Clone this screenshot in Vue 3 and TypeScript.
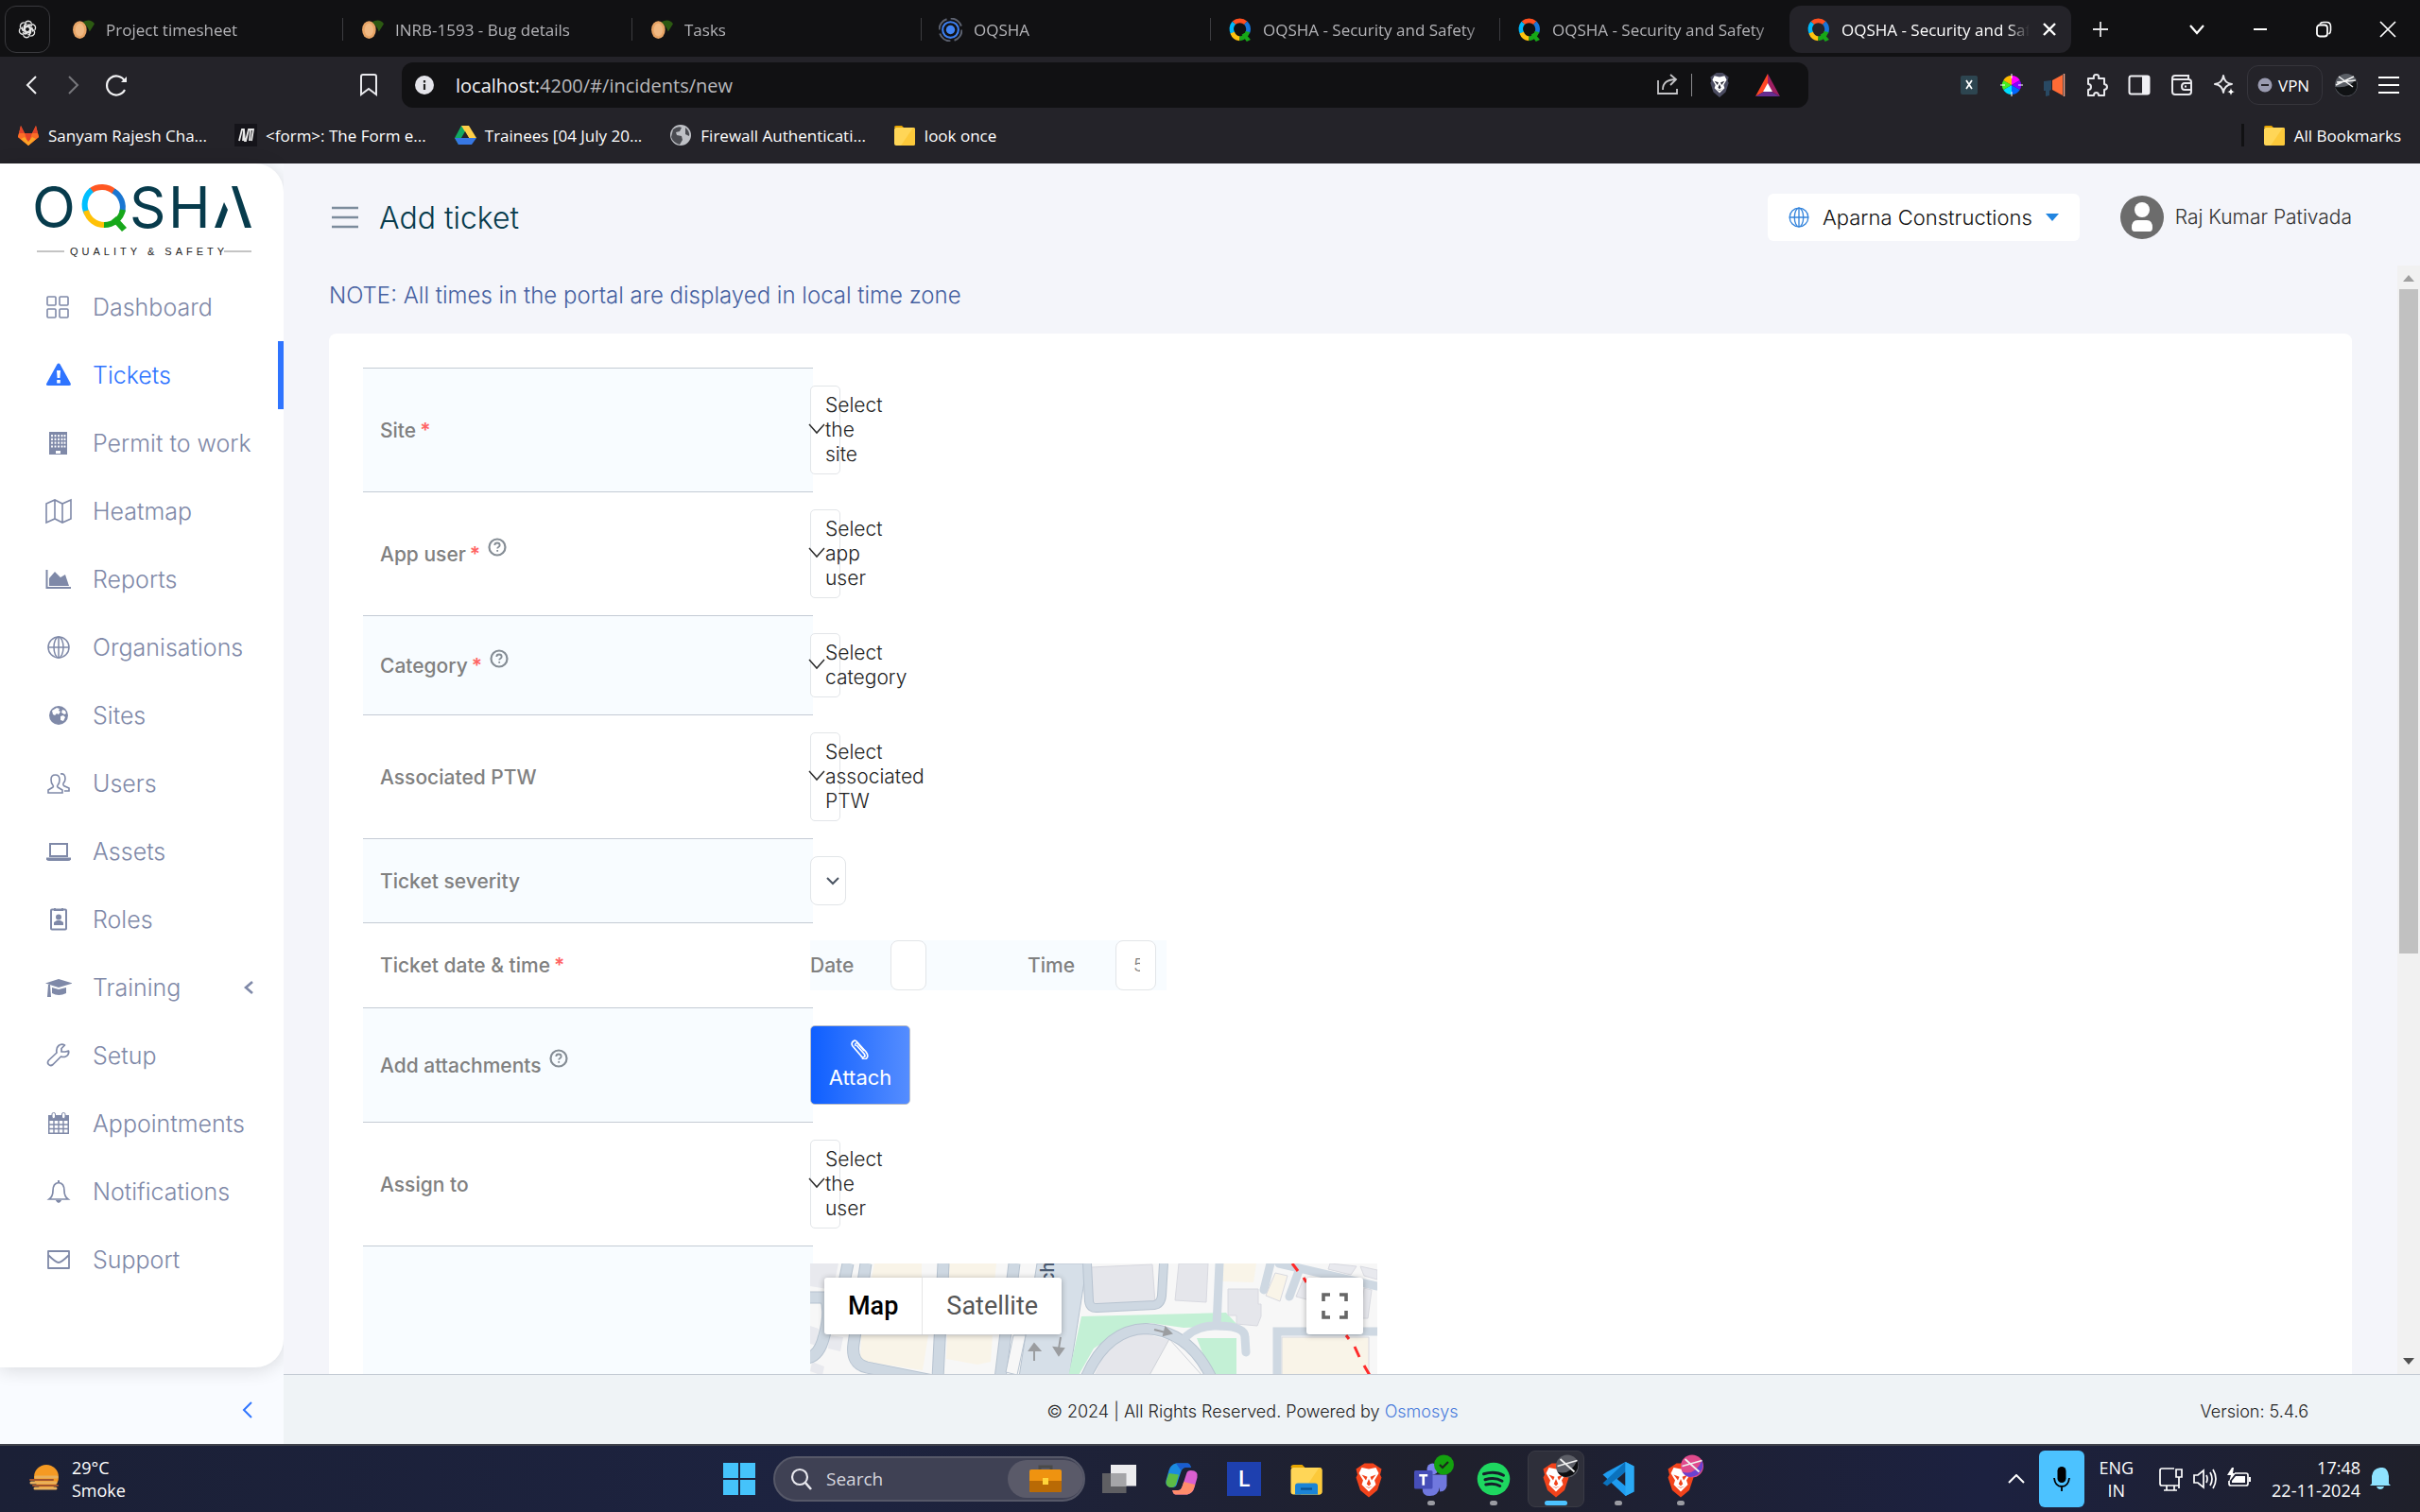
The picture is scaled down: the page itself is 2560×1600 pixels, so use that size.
<script setup lang="ts">
import { ref } from 'vue'

interface Tab { title: string; icon: string; active?: boolean }
interface NavItem { label: string; icon: string; active?: boolean; expandable?: boolean }
interface FormRow { id: string; label: string; required?: boolean; help?: boolean; kind: 'pick' | 'severity' | 'datetime' | 'attach' | 'map'; placeholder?: string }

const leaf = '<ellipse cx="9" cy="12" rx="7" ry="9" fill="#e8a566"/><ellipse cx="9" cy="12" rx="4.500" ry="6.500" fill="#f0b983"/><path d="M12 4Q20 0 24 6L19 14Q17 8 12 4Z" fill="#2c5a12"/>'
const qring = '<g fill="none" stroke-width="4.500"><path d="M6 5A9 9 0 0 1 18 5" stroke="#ff4f1f"/><path d="M5 16A9.500 9.500 0 0 1 6 5" stroke="#00b8fb"/><path d="M12 21A9 9 0 0 1 4.500 15" stroke="#ffc20e"/><path d="M18 5A9.500 9.500 0 0 1 20 15" stroke="#1976d8"/><path d="M20 14A9 9 0 0 1 12 21" stroke="#17a817"/></g><path d="M14 17l3-2 6 7-4 2z" fill="#17a817"/>'
const target = '<g fill="none"><circle cx="12" cy="12" r="11.500" stroke="#5d6270" stroke-width="2" stroke-dasharray="14 4"/><circle cx="12" cy="12" r="8" stroke="#3d7ff0" stroke-width="2"/></g><circle cx="12" cy="12" r="4.500" fill="#4285f4"/>'
const lion = '<path d="M6 3l3-2h6l3 2 3 2-1 4 1 2-3 9-6 5-6-5-3-9 1-2-1-4z" fill="#f2431b"/><path d="M12 5l5-1 2 4-3 5 1 3-5 5-5-5 1-3-3-5 2-4z" fill="#fff"/><path d="M7 9l4 1.500L10 13zM17 9l-4 1.500 1 2.500zM12 12l1.500 3.500L12 17l-1.500-1.500zM9 17l3 1.500L15 17l-3 1z" fill="#f2431b"/>'
const shieldIcon = lion.replace('#f2431b', '#4a4b60').replace('#f2431b', '#2c2c38')
const folder = '<path d="M1 4a2 2 0 0 1 2-2h6l3 3H3z" fill="#e6a400"/><rect x="1" y="4" width="22" height="19" rx="2" fill="#ffd657"/><path d="M21 4a2 2 0 0 1 2 2v15a2 2 0 0 1-2 2H8z" fill="#fcc93a"/>'

const tabs: Tab[] = [
  { title: 'Project timesheet', icon: leaf },
  { title: 'INRB-1593 - Bug details', icon: leaf },
  { title: 'Tasks', icon: leaf },
  { title: 'OQSHA', icon: target },
  { title: 'OQSHA - Security and Safety', icon: qring },
  { title: 'OQSHA - Security and Safety', icon: qring },
  { title: 'OQSHA - Security and Safety', icon: qring, active: true },
]

const bookmarks = [
  { title: 'Sanyam Rajesh Cha...', icon: '<path d="M12 23L1 14 4 2l4 8h8l4-8 3 12z" fill="#fc6d26"/><path d="M12 23L8 10h8z" fill="#e24329"/><path d="M12 23L1 14l1-4h6zM12 23l11-9-1-4h-6z" fill="#fc6d26"/><path d="M12 23L4 16l4-2 4 5 4-5 4 2z" fill="#fca326"/><path d="M4 2l4 8H2zM20 2l-4 8h6z" fill="#e24329"/>' },
  { title: '<form>: The Form e...', icon: '<rect width="24" height="24" fill="#15141a"/><path d="M5 18L8 6h2l1 12h1l3-12h2l-1 12M10 6l-1 12M17 6l3 0-2 12" fill="none" stroke="#e8e8e8" stroke-width="1.800"/>' },
  { title: 'Trainees [04 July 20...', icon: '<path d="M8 2h8l-8 14-3 6-4-7z" fill="#11a861"/><path d="M8 2h8l8 13h-8z" fill="#ffcf48"/><path d="M1 15l4 7h14l5-7z" fill="#3777e3"/><path d="M12 8l4 7H8z" fill="#242329"/>' },
  { title: 'Firewall Authenticati...', icon: '<circle cx="12" cy="12" r="11" fill="#bfc1c6"/><path d="M4 6q5-4 9-2l-2 4-4 1 1 3 5 1 1 4-3 5q-7-2-9-8zM17 4q5 4 4 9l-4-2z" fill="#4a4b51"/>' },
  { title: 'look once', icon: folder },
]

const nav: NavItem[] = [
  { label: 'Dashboard', icon: '<g fill="none" stroke="currentColor" stroke-width="1.600"><rect x="2" y="3" width="9" height="9" rx="1"/><rect x="15" y="3" width="9" height="9" rx="1"/><rect x="2" y="16" width="9" height="9" rx="1"/><rect x="15" y="16" width="9" height="9" rx="1"/></g>' },
  { label: 'Tickets', active: true, icon: '<path d="M14 1.500q1 0 1.600 1l11 20q1 2.500-1.600 2.500H3Q0 25 1.400 22.500l11-20Q13 1.500 14 1.500z" fill="currentColor"/><path d="M12 9h4l-.6 8h-2.800zM12.200 19h3.600v3.400h-3.600z" fill="#fff"/>' },
  { label: 'Permit to work', icon: '<path d="M4 2h19v24H4z" fill="currentColor"/><path d="M7 5v14M10.500 5v14M14 5v14M17.500 5v14M20.500 5v14" stroke="#fff" stroke-width="1.800" stroke-dasharray="2.200 1.600"/><path d="M11 22h5v3h-5z" fill="#fff"/>' },
  { label: 'Heatmap', icon: '<path d="M1 6l9-4 8 4 9-4v20l-9 4-8-4-9 4zM10 2v20M18 6v20" fill="none" stroke="currentColor" stroke-width="1.600"/>' },
  { label: 'Reports', icon: '<path d="M1.500 4v19H27" fill="none" stroke="currentColor" stroke-width="2"/><path d="M4 21v-8l6-7 6 6 5-3 4 12z" fill="currentColor"/>' },
  { label: 'Organisations', icon: '<g fill="none" stroke="currentColor" stroke-width="1.500"><circle cx="14" cy="14" r="11"/><ellipse cx="14" cy="14" rx="5" ry="11"/><path d="M3 14h22M14 3v22"/></g>' },
  { label: 'Sites', icon: '<circle cx="14" cy="14" r="10" fill="currentColor"/><path d="M7 9l5-3 3 1-1 2 2 1-2 3-2-1-2 2-2-1zM16 15l3-1 2 2-2 4-3-1zM18 8l3 1 1 3-2 1-3-2z" fill="#fff"/>' },
  { label: 'Users', icon: '<g fill="none" stroke="currentColor" stroke-width="1.600"><path d="M3 24v-3l5-3q1-1 0-2-2-2-2-6 0-5 4.500-5T15 10q0 4-2 6-1 1 0 2l5 3v3zM16 4q5-1 5 5 0 3-2 5-.500 1.500.500 2.500L25 19v3h-5"/></g>' },
  { label: 'Assets', icon: '<path d="M5 6h18v13H5z" fill="none" stroke="currentColor" stroke-width="2"/><path d="M1 20.500h26v2q-1 1.500-3 1.500H4q-2 0-3-1.500z" fill="currentColor"/>' },
  { label: 'Roles', icon: '<rect x="6" y="3.500" width="16" height="21" rx="1" fill="none" stroke="currentColor" stroke-width="2"/><path d="M9 2h2v2h6V2h2v3H9z" fill="currentColor"/><circle cx="14" cy="11.500" r="3" fill="currentColor"/><path d="M9 20v-3l3-2h4l3 2v3z" fill="currentColor"/>' },
  { label: 'Training', icon: '<path d="M0 9.500L14 5l15 4.500L14 14z" fill="currentColor"/><path d="M7 14l7 2 8-2v6q-8 4-15 0zM3 11h2l1 13H2z" fill="currentColor"/>' },
  { label: 'Setup', icon: '<path d="M24.500 9q1 4-3 6-2.500 1-5 0L8 23.500q-2.500 2-4.500 0t0-4.500L12 11q-1-5 2-7.500T20.500 3L17 6.500V10h4z" fill="none" stroke="currentColor" stroke-width="1.700" stroke-linejoin="round"/>' },
  { label: 'Appointments', icon: '<path d="M3 5h22v20H3z" fill="currentColor"/><path d="M4.500 11h19v12.500h-19z" fill="#fff"/><path d="M9 11v13M14 11v13M19 11v13M4 15h20M4 19.500h20" stroke="currentColor" stroke-width="1.400"/><rect x="7" y="2.500" width="3.500" height="6" rx="1.500" fill="#fff" stroke="currentColor"/><rect x="17.500" y="2.500" width="3.500" height="6" rx="1.500" fill="#fff" stroke="currentColor"/>' },
  { label: 'Notifications', icon: '<path d="M4 22q4-3 4-9 0-8 6-8.500 6 .500 6 8.500 0 6 4 9z" fill="none" stroke="currentColor" stroke-width="1.700"/><path d="M13 2h2v3h-2zM11 23h6q-1 3-3 3t-3-3z" fill="currentColor"/>' },
  { label: 'Support', icon: '<path d="M3 5h22v18H3zM3 9q8 8 11 8t11-8" fill="none" stroke="currentColor" stroke-width="1.800" stroke-linejoin="round"/>' },
].map((n) => ({ expandable: n.label === 'Training', ...n }))

const rows: FormRow[] = [
  { id: 'site', label: 'Site', required: true, kind: 'pick', placeholder: 'Select the site' },
  { id: 'app-user', label: 'App user', required: true, help: true, kind: 'pick', placeholder: 'Select app user' },
  { id: 'category', label: 'Category', required: true, help: true, kind: 'pick', placeholder: 'Select category' },
  { id: 'ptw', label: 'Associated PTW', kind: 'pick', placeholder: 'Select associated PTW' },
  { id: 'severity', label: 'Ticket severity', kind: 'severity' },
  { id: 'date', label: 'Ticket date & time', required: true, kind: 'datetime' },
  { id: 'attach', label: 'Add attachments', help: true, kind: 'attach' },
  { id: 'assignee', label: 'Assign to', kind: 'pick', placeholder: 'Select the user' },
  { id: 'map', label: '', kind: 'map' },
]

const extensions = [
  { name: 'Translate', icon: '<rect x="3" y="2" width="18" height="20" rx="2" fill="#2d4550"/><path d="M9 7l6 9M15 7l-6 9" stroke="#fff" stroke-width="1.700"/>' },
  { name: 'Colour picker', icon: '<path d="M12 12V2a10 10 0 0 1 8.700 5z" fill="#f0f"/><path d="M12 12l8.700-5a10 10 0 0 1 0 10z" fill="#80f"/><path d="M12 12l8.700 5A10 10 0 0 1 12 22z" fill="#06f"/><path d="M12 12v10a10 10 0 0 1-8.700-5z" fill="#0df"/><path d="M12 12l-8.700 5a10 10 0 0 1 0-10z" fill="#4e2"/><path d="M12 12L3.300 7A10 10 0 0 1 12 2z" fill="#fb0"/><path d="M12 0v5M12 19v5M0 12h5M19 12h5" stroke="#fff"/>' },
  { name: 'Announcements', icon: '<path d="M10 7l11-6v22l-11-6z" fill="#ff6b35"/><path d="M1 8l8-1v10l-2 1v5l-4 1v-6H1z" fill="#294963"/><path d="M22.500 0v24" stroke="#f6a58a" stroke-width="1.500"/>' },
  { name: 'Extensions', icon: '<path d="M3 5h6q-1-4 2.500-4T14 5h6v6q3 .500 3 3t-3 3v6h-6q0-3-2.500-3T9 23H3v-6q3 0 3-3t-3-3z" fill="none" stroke="#e8e8ec" stroke-width="2" stroke-linejoin="round"/>' },
  { name: 'Side panel', icon: '<rect x="1.500" y="2.500" width="21" height="19" rx="2" fill="none" stroke="#f0f0f4" stroke-width="2"/><path d="M15 3h7v18h-7z" fill="#f0f0f4"/>' },
  { name: 'Wallet', icon: '<path d="M2 5q0-3 3-3h14v4H4q-2 0-2-1v14q0 3 3 3h14q3 0 3-3V9q0-3-3-3M22 10h-7q-3 0-3 3.500t3 3.500h7zM15 13.500h2" fill="none" stroke="#e8e8ec" stroke-width="2"/>' },
  { name: 'Assistant', icon: '<path d="M11 2q1 8 9 9-8 1-9 9-1-8-9-9 8-1 9-9z" fill="none" stroke="#e8e8ec" stroke-width="2" stroke-linejoin="round"/><path d="M19 15q.500 4 4 4-3.500.500-4 4-.500-3.500-4-4 3.500 0 4-4z" fill="#fff"/>' },
]

const ball = (a: string, b: string) => `<g transform="translate(12 -5)"><circle cx="8" cy="8" r="8" fill="${a}"/><path d="M1 12Q10 15 15 4q2 6-3 10-7 4-11-2z" fill="${b}"/><path d="M1 8l14-4M3 3l10 9" stroke="#eee" stroke-width="1.200"/></g>`

const apps = [
  { name: 'Task view', dot: '', icon: '<rect x="0" y="8" width="17" height="14" fill="#5f5f63"/><rect x="6" y="2" width="18" height="15" fill="#ececee"/><path d="M6 8h11v9H6z" fill="#a5a5a8"/>' },
  { name: 'Copilot', dot: '', icon: '<path d="M1 13l2-7q1-4 5-5h8q2 0 2.500 3h-4q-2 0-3 3L8.500 16q-.500 2-3 2Q0 18 1 13z" fill="#1b8be0"/><path d="M1 14l2-6 7 1-2 7q-1 2-3 2-4 0-4-4z" fill="#5dbb46"/><path d="M8 1h8q2 0 2.500 3h-4q-2 0-3 2z" fill="#1a5ccf"/><path d="M23 11l-2 7q-1 4-5 5H8q-2 0-2.500-3h4q2 0 3-3l3-9q.500-2 3-2 5.500 0 4.500 5z" fill="#d95fd0"/><path d="M5.500 20h4q2 0 3-3l1-3 8 2-1 3q-1 3-4.500 4H8q-2 0-2.500-3z" fill="#ff8c6b"/>' },
  { name: 'L', dot: '', icon: 'letter' },
  { name: 'File Explorer', dot: '', icon: folder + '<path d="M4 23v-6q0-2 2-2h12q2 0 2 2v6z" fill="#1b84d6"/><path d="M8 19h8" stroke="#0b5394" stroke-width="1.500"/>' },
  { name: 'Brave', dot: '', icon: lion },
  { name: 'Teams', dot: 'dot', icon: '<circle cx="13" cy="5" r="4" fill="#7b83eb"/><path d="M6 9h12v9q-1 6-7 6t-5-6zM18 9h5v8q-1 4-5 4z" fill="#7078de"/><rect x="0" y="6" width="13" height="13" rx="1" fill="#464eb8"/><path d="M3.500 9.500h6M6.500 9.500v7" stroke="#fff" stroke-width="1.800"/><circle cx="21" cy="2" r="7" fill="#13a10e"/><path d="M18 2l2 2 4-4" fill="none" stroke="#1b2a1b" stroke-width="1.500"/>' },
  { name: 'Spotify', dot: 'dot', icon: '<circle cx="12" cy="12" r="11.500" fill="#1ed760"/><path d="M5 8.500q8-2.500 14 1M6 12.500q7-2 12 1M6.500 16q6-1.500 10 1" fill="none" stroke="#15202b" stroke-width="2" stroke-linecap="round"/>' },
  { name: 'Brave, dark profile', dot: 'bar', icon: lion + ball('#5c5e66', '#0c0d10') },
  { name: 'Visual Studio Code', dot: 'dot', icon: '<path d="M17 0l6 3v18l-6 3L1 9l3-2z" fill="#1f9cf0"/><path d="M17 0L1 15l3 2L17 7z" fill="#0b72bd"/><path d="M17 7v10l-6-5z" fill="#1d2233"/><path d="M17 0l6 3v18l-6 3z" fill="#2aaaf5"/>' },
  { name: 'Brave, purple profile', dot: 'dot', icon: lion + ball('#e04a8c', '#6a43d0') },
]

const date = ref('')
const time = ref('5')
</script>

<template>
  <div class="screen">
    <header class="browser">
      <div class="tabstrip">
        <button class="pinned" aria-label="Pinned tab">
          <svg width="20" height="20" viewBox="0 0 24 24"><g fill="none" stroke="#e6e6e6" stroke-width="1.600"><path v-for="a in [0, 60, 120, 180, 240, 300]" :key="a" :transform="`rotate(${a} 12 12)`" d="M9 14V6q0-4 4-4.500 3 0 4.500 3M9 9l5-3 4 2"/></g></svg>
        </button>
        <div v-for="(t, i) in tabs" :key="i" class="tab" :class="{ active: t.active }">
          <svg class="fav" viewBox="0 0 24 24" v-html="t.icon"></svg>
          <span class="tab-title">{{ t.title }}</span>
          <button v-if="t.active" class="bare" aria-label="Close tab"><svg width="14" height="14" viewBox="0 0 14 14"><path d="M1 1l12 12M13 1L1 13" stroke="#fff" stroke-width="2.400"/></svg></button>
        </div>
        <button class="bare plus" aria-label="New tab"><svg width="18" height="18" viewBox="0 0 18 18"><path d="M9 1v16M1 9h16" stroke="#e4e4e6" stroke-width="1.800"/></svg></button>
        <div class="window-buttons">
          <button class="bare" aria-label="Search tabs"><svg width="18" height="18" viewBox="0 0 18 18"><path d="M2 5l7 8 7-8" fill="none" stroke="#fff" stroke-width="2.200"/></svg></button>
          <button class="bare" aria-label="Minimise"><svg width="16" height="18" viewBox="0 0 16 18"><path d="M1 9h14" stroke="#fff" stroke-width="2"/></svg></button>
          <button class="bare" aria-label="Restore"><svg width="18" height="18" viewBox="0 0 18 18"><path d="M5 3.500q1-2 4-2h3q4.500 0 4.500 4.500v4q0 3-2 4" fill="none" stroke="#fff" stroke-width="1.600"/><rect x="2" y="4.500" width="11" height="12" rx="3" fill="none" stroke="#fff" stroke-width="1.800"/></svg></button>
          <button class="bare" aria-label="Close"><svg width="18" height="18" viewBox="0 0 18 18"><path d="M1 1l16 16M17 1L1 17" stroke="#fff" stroke-width="1.700"/></svg></button>
        </div>
      </div>
      <div class="toolbar">
        <div class="history">
          <button class="bare" aria-label="Back"><svg width="24" height="24" viewBox="0 0 24 24"><path d="M17 3l-9 9 9 9" fill="none" stroke="#f2f2f4" stroke-width="2"/></svg></button>
          <button class="bare" aria-label="Forward"><svg width="24" height="24" viewBox="0 0 24 24"><path d="M7 3l9 9-9 9" fill="none" stroke="#77777c" stroke-width="2"/></svg></button>
          <button class="bare" aria-label="Reload"><svg width="24" height="24" viewBox="0 0 24 24"><path d="M21 8a10 10 0 1 0 0 9" fill="none" stroke="#f2f2f4" stroke-width="2.200"/><path d="M17 9h6V3z" fill="#f2f2f4"/></svg></button>
        </div>
        <button class="bare mark" aria-label="Bookmark"><svg width="24" height="24" viewBox="0 0 24 24"><path d="M4 3q0-2 2-2h12q2 0 2 2v19l-8-6-8 6z" fill="none" stroke="#e8e8ec" stroke-width="2"/></svg></button>
        <div class="address">
          <svg width="20" height="20" viewBox="0 0 20 20"><circle cx="10" cy="10" r="10" fill="#e4e4ea"/><path d="M10 9v6M10 5v2.400" stroke="#222" stroke-width="2.200"/></svg>
          <span class="url"><span>localhost:</span>4200/#/incidents/new</span>
          <button class="bare" aria-label="Share"><svg width="24" height="24" viewBox="0 0 24 24"><path d="M2 7v14h20v-5M7 17q0-11 14-11M15 1l6 5-6 6" fill="none" stroke="#c5c5c8" stroke-width="1.800"/></svg></button>
          <i class="rule"></i>
          <button class="bare" aria-label="Shields"><svg width="26" height="28" viewBox="0 0 24 26" v-html="shieldIcon"></svg></button>
          <button class="bare" aria-label="Rewards"><svg width="26" height="24" viewBox="0 0 26 24"><path d="M13 0L0 24l9-5 4-8z" fill="#ff4724"/><path d="M13 0l13 24-9-5-4-8z" fill="#9e1f63"/><path d="M0 24h26l-9-5H9z" fill="#662d91"/><path d="M13 10l5 9H8z" fill="#fff"/></svg></button>
        </div>
        <div class="ext">
          <button v-for="e in extensions" :key="e.name" class="bare" :aria-label="e.name"><svg width="24" height="24" viewBox="0 0 24 24" v-html="e.icon"></svg></button>
        </div>
        <button class="vpn"><svg width="16" height="16" viewBox="0 0 16 16"><circle cx="8" cy="8" r="7.500" fill="#9a9bb0"/><path d="M4 8h8" stroke="#242329" stroke-width="2"/></svg>VPN</button>
        <button class="bare" aria-label="Profile"><svg width="24" height="24" viewBox="0 0 24 24"><circle cx="12" cy="12" r="12" fill="#5b5f66"/><path d="M0 14Q15 16 22 6q4 10-4 16-12 5-18-8z" fill="#101214"/><path d="M2 9l20-2M4 3l15 11M1 12L20 3" stroke="#f4f4f4" stroke-width="1.500"/></svg></button>
        <button class="bare menu" aria-label="Menu"><svg width="24" height="20" viewBox="0 0 24 20"><path d="M1 2h22M1 10h22M1 18h22" stroke="#fff" stroke-width="2"/></svg></button>
      </div>
      <nav class="bookmarks">
        <a v-for="b in bookmarks" :key="b.title" href="#"><svg width="24" height="24" viewBox="0 0 24 24" v-html="b.icon"></svg>{{ b.title }}</a>
        <i class="dark-rule"></i>
        <a href="#"><svg width="24" height="24" viewBox="0 0 24 24" v-html="folder"></svg>All Bookmarks</a>
      </nav>
    </header>

    <div class="app">
      <aside>
        <div class="side-card">
          <svg class="logo" width="240" height="84" viewBox="0 0 240 84">
            <g font-family="Inter, sans-serif" font-size="60" font-weight="400" fill="#073b4c">
              <text x="6" y="49">O</text><text x="109" y="49">S</text><text x="150" y="49">H</text>
            </g>
            <g fill="none" stroke-width="6">
              <path d="M68 10A20 20 0 0 1 93 11" stroke="#ff5722"/>
              <path d="M64 34A20 20 0 0 1 69 9" stroke="#00bfff"/>
              <path d="M83 46A20 20 0 0 1 63 31" stroke="#ffc107"/>
              <path d="M92 10A20 20 0 0 1 101 33" stroke="#1976d2"/>
              <path d="M102 30A20 20 0 0 1 82 46" stroke="#17a81a"/>
            </g>
            <path d="M90 41l5-4 11 12-5 4z" fill="#17a81a"/>
            <path d="M217 5h6l15 44h-7zM209 22l4 8-7 19h-7z" fill="#073b4c"/>
            <path d="M11 74h29M209 74h29" stroke="#8a8a8a"/>
            <text x="46" y="78" font-family="Liberation Sans, Arial, sans-serif" font-size="11" letter-spacing="4" fill="#222">QUALITY &amp; SAFETY</text>
          </svg>
          <nav class="nav">
            <a v-for="n in nav" :key="n.label" href="#" :class="{ active: n.active }">
              <svg width="28" height="28" viewBox="0 0 28 28" v-html="n.icon"></svg>
              <span>{{ n.label }}</span>
              <svg v-if="n.expandable" class="more" width="12" height="14" viewBox="0 0 12 14"><path d="M10 1L3 7l7 6" fill="none" stroke="#7f89a8" stroke-width="2.600"/></svg>
            </a>
          </nav>
        </div>
        <button class="bare collapse" aria-label="Collapse sidebar"><svg width="12" height="18" viewBox="0 0 12 18"><path d="M10 1L2 9l8 8" fill="none" stroke="#2f74ff" stroke-width="2"/></svg></button>
      </aside>

      <main>
        <div class="topbar">
          <button class="bare" aria-label="Toggle menu"><svg width="28" height="24" viewBox="0 0 28 24"><path d="M0 2h28M0 12h28M0 22h28" stroke="#7c8c9c" stroke-width="2.400"/></svg></button>
          <h1>Add ticket</h1>
          <button class="org">
            <svg width="22" height="22" viewBox="0 0 28 28"><g fill="none" stroke="#3484dc" stroke-width="1.700"><circle cx="14" cy="14" r="12.500"/><ellipse cx="14" cy="14" rx="6" ry="12.500"/><path d="M1 14h26M14 1v26"/></g></svg>
            <span>Aparna Constructions</span>
            <svg width="14" height="8" viewBox="0 0 14 8"><path d="M0 0h14L7 8z" fill="#2185e0"/></svg>
          </button>
          <svg class="avatar" width="46" height="46" viewBox="0 0 46 46"><circle cx="23" cy="23" r="23" fill="#6c6c6c"/><circle cx="23" cy="15" r="8" fill="#fff"/><path d="M12 34q0-8 6-8h10q6 0 6 8 0 4-3 4H15q-3 0-3-4z" fill="#fff"/></svg>
          <span class="user">Raj Kumar Pativada</span>
        </div>

        <div class="body">
          <div class="scroller">
            <p class="note">NOTE: All times in the portal are displayed in local time zone</p>
            <form class="card" @submit.prevent>
              <div v-for="r in rows" :key="r.id" class="row">
                <div class="cell">
                  <label :for="r.id">{{ r.label }}<b v-if="r.required">*</b></label>
                  <svg v-if="r.help" class="help" width="20" height="20" viewBox="0 0 20 20"><circle cx="10" cy="10" r="8.500" fill="none" stroke="#858d95" stroke-width="2.200"/><path d="M7.300 8q0-2.500 2.700-2.500T12.700 8q0 1-1.500 2-1 .600-1 1.500M10.200 13v1.800" fill="none" stroke="#858d95" stroke-width="1.800"/></svg>
                </div>
                <div class="control">
                  <div v-if="r.kind === 'pick'" class="pick">
                    <select :id="r.id"><option value=""></option></select>
                    <span>{{ r.placeholder }}</span>
                    <svg width="18" height="12" viewBox="0 0 18 12"><path d="M1 1l8 9 8-9" fill="none" stroke="#2d2d2d" stroke-width="1.500"/></svg>
                  </div>
                  <div v-else-if="r.kind === 'severity'" class="severity">
                    <select :id="r.id"><option value=""></option></select>
                    <svg width="14" height="10" viewBox="0 0 14 10"><path d="M1 1l6 6 6-6" fill="none" stroke="#4b5563" stroke-width="2"/></svg>
                  </div>
                  <div v-else-if="r.kind === 'datetime'" class="datetime">
                    <label for="date">Date</label><input id="date" v-model="date" class="d" type="text" />
                    <label for="time">Time</label><input id="time" v-model="time" class="t" type="text" />
                  </div>
                  <button v-else-if="r.kind === 'attach'" :id="r.id" class="attach">
                    <svg width="22" height="22" viewBox="0 0 22 22"><path d="M7 7l8 9q2 2.500 0 3.500t-3-1L3 8Q1 5 3.500 3T8 4l9 10q3 4 1 6.500t-5 .500" fill="none" stroke="#fff" stroke-width="1.700"/><path d="M6 8q-1-2 .500-3T9 6l6 7" fill="none" stroke="#fff" stroke-width="1.500"/></svg>
                    Attach
                  </button>
                  <div v-else class="map">
                    <svg width="600" height="120" viewBox="0 0 600 120">
                      <rect width="600" height="120" fill="#f7f7f7"/>
                      <path d="M0 0h30l-6 28-24-4zM0 66l9 3-2 18-7-2zM20 76l15 2-3 15-13-3zM2 104l13 5-2 10-13-5z" fill="#e8e9ee"/>
                      <path d="M68 0h50v30H62zM54 76h71l-6 37-66-10zM145 0h52l-3 30h-50zM145 76h48l-2 28-14 3-33-6z" fill="#f9f4e8"/>
                      <g fill="none" stroke="#b7c3d0" stroke-width="13"><path d="M40 0l-6 30M0 36h16q6 14-1 40-5 22-18 24M59 0L46 85q-3 21 14 25l90 18M141 0l-6 122M216 0l-15 122"/></g>
                      <g fill="none" stroke="#ced8e2" stroke-width="11"><path d="M40 0l-6 30M0 36h16q6 14-1 40-5 22-18 24M59 0L46 85q-3 21 14 25l90 18M141 0l-6 122M216 0l-15 122"/></g>
                      <path d="M240 0h53l-19 120h-53z" fill="#d6dfe8" stroke="#b7c3d0"/>
                      <path d="M215 76h13l-9 42-12-3z" fill="#f7f7f7" stroke="#b7c3d0"/>
                      <path d="M287 56l153-4 13 14-58 2-35-5-30 7-30 20-17 30h-10zM409 79h42v41h-26z" fill="#c3f0d5"/>
                      <path d="M297 4l65-3 3 41-67 3zM390 0h31l-2 41-33-2zM442 27h32v16h3v13l-4 10-22-2v-9h-9z" fill="#e5e6eb" stroke="#d8d9e0"/>
                      <path d="M293 0l2 40q1 8 9 7l60-3q7-1 8-10l2-34" fill="none" stroke="#b7c3d0" stroke-width="10"/>
                      <path d="M293 0l2 40q1 8 9 7l60-3q7-1 8-10l2-34" fill="none" stroke="#ced8e2" stroke-width="8"/>
                      <path d="M436 0h36l-3 20-33-1z" fill="#f9f4e8"/>
                      <path d="M300 120q15-42 50-47l30 8-22 39z" fill="#e5e6eb"/>
                      <path d="M380 80l36 40h-58z" fill="#f7f7f7" stroke="#cfd2d8"/>
                      <g fill="none" stroke="#b7c3d0" stroke-width="12"><path d="M291 122q22-52 64-53 46 2 70 53"/></g>
                      <g fill="none" stroke="#ced8e2" stroke-width="10"><path d="M291 122q22-52 64-53 46 2 70 53"/></g>
                      <path d="M398 77q14-12 32-11l3-66M430 66q30 0 30 12l1 16M487 0l-7 28M518 5l-11 30M496 0l104 24M494 120V72h106" fill="none" stroke="#ced8e2" stroke-width="9" stroke-linecap="round"/>
                      <path d="M492 10l13 3-8 27-15-6zM499 78h92v42h-92z" fill="#f9f4e8" stroke="#d8d9e0"/>
                      <path d="M550 0l28 3-6 9-24-6zM582 3l18 4v10l-14-4zM522 16l10 2v22l-18-5zM586 26l8 2-4 30h-8z" fill="#e8e9ee" stroke="#d8d9e0"/>
                      <path d="M510 0l6 8M522 15l3 5M567 76l3 4M576 88l5 11M586 108l7 12" stroke="#ff2b2b" stroke-width="3"/>
                      <path d="M237 103V88m-5 4l5-7 6 7zM265 78l-2 12m-5-1l5 8 5-7zM364 70l12 3m0-5l6 6-8 2z" fill="#9b9da0" stroke="#9b9da0" stroke-width="2"/>
                      <text transform="translate(258 20) rotate(-90)" font-family="Roboto, sans-serif" font-size="20" font-weight="500" fill="#4a5a70">ch</text>
                    </svg>
                    <div class="map-type"><button>Map</button><button>Satellite</button></div>
                    <button class="full" aria-label="Full screen"><svg width="28" height="28" viewBox="0 0 28 28"><path d="M2 9V2h7M19 2h7v7M26 19v7h-7M9 26H2v-7" fill="none" stroke="#666" stroke-width="3.600"/></svg></button>
                  </div>
                </div>
              </div>
            </form>
          </div>
          <div class="scrollbar">
            <svg width="12" height="7" viewBox="0 0 12 7"><path d="M0 7h12L6 0z" fill="#a0a0a0"/></svg>
            <i></i>
            <svg width="12" height="7" viewBox="0 0 12 7"><path d="M0 0h12L6 7z" fill="#505050"/></svg>
          </div>
        </div>
        <footer>
          <span class="copy">© 2024 | All Rights Reserved. Powered by <a href="#">Osmosys</a></span>
          <span class="version">Version: 5.4.6</span>
        </footer>
      </main>
    </div>

    <div class="taskbar">
      <button class="weather">
        <svg width="36" height="32" viewBox="0 0 36 32"><circle cx="20" cy="14" r="13" fill="#f59a23"/><path d="M9 14h22M4 20h26M8 26h22" stroke="#e8b05c" stroke-width="3" stroke-linecap="round"/><path d="M3 17h24M6 23h26" stroke="#a0522d" stroke-width="2" stroke-linecap="round"/></svg>
        <span>29°C<br />Smoke</span>
      </button>
      <div class="dock">
        <button class="slot" aria-label="Start"><svg width="36" height="36" viewBox="0 0 36 36"><path d="M1 1h16v16H1zM19 1h16v16H19zM1 19h16v16H1zM19 19h16v16H19z" fill="#45c3fb"/></svg></button>
        <label class="search">
          <svg width="24" height="24" viewBox="0 0 24 24"><circle cx="10" cy="10" r="8" fill="none" stroke="#e8e8ee" stroke-width="2.200"/><path d="M16 16l6 7" stroke="#e8e8ee" stroke-width="2.600"/></svg>
          <input type="text" placeholder="Search" aria-label="Search" />
          <span class="chip"><svg width="36" height="30" viewBox="0 0 36 30"><path d="M12 6V2h12v4" fill="none" stroke="#4a4a4a" stroke-width="3"/><rect x="1" y="5" width="34" height="24" rx="2" fill="#ef9310"/><path d="M1 17h34v10q0 2-2 2H3q-2 0-2-2z" fill="#b96a05"/><path d="M15 14h6v7h-6z" fill="#ffd43a"/></svg></span>
        </label>
        <button v-for="a in apps" :key="a.name" class="slot" :class="{ current: a.dot === 'bar' }" :aria-label="a.name">
          <span v-if="a.icon === 'letter'" class="letter">L</span>
          <svg v-else width="36" height="36" viewBox="0 0 24 24" overflow="visible" v-html="a.icon"></svg>
          <i v-if="a.dot" :class="a.dot"></i>
        </button>
      </div>
      <div class="tray">
        <button class="bare" aria-label="Hidden icons"><svg width="18" height="10" viewBox="0 0 18 10"><path d="M1 9l8-8 8 8" fill="none" stroke="#fff" stroke-width="2"/></svg></button>
        <button class="mic" aria-label="Microphone"><svg width="18" height="26" viewBox="0 0 18 26"><rect x="4.500" y="0" width="9" height="17" rx="4.500" fill="#000"/><path d="M1 12q1 9 8 9t8-9M9 21v5" fill="none" stroke="#000" stroke-width="1.800"/></svg></button>
        <span class="lang">ENG<br />IN</span>
        <svg width="26" height="26" viewBox="0 0 26 26"><path d="M17 2H4Q2 2 2 4v14q0 2 2 2h18v-8M6 25h14M9 20v5M17 20v5M19 3h6v8h-6zM22 11v12" fill="none" stroke="#fff" stroke-width="1.700"/></svg>
        <svg width="26" height="26" viewBox="0 0 26 26"><path d="M2 9h4l6-5v18l-6-5H2zM15 9q2 4 0 8M19 6q4 7 0 14M22 3q6 10 0 20" fill="none" stroke="#fff" stroke-width="1.700"/></svg>
        <svg width="26" height="26" viewBox="0 0 26 26"><path d="M9 7h12q2 0 2 2v9q0 2-2 2H5q-2 0-2-2v-3" fill="none" stroke="#fff" stroke-width="1.700"/><path d="M10 10h10v7H6v-2zM24 11h2v5h-2zM6 1L1 9h4l-2 7 7-9H7l1-6z" fill="#fff"/></svg>
        <span class="clock">17:48<br />22-11-2024</span>
        <svg width="22" height="24" viewBox="0 0 22 24"><path d="M2 17V9q1-8 9-9t9 9v8l2 2H0zM7 20h8q-1 3-4 3t-4-3z" fill="#8fe3ff"/></svg>
      </div>
    </div>
  </div>
</template>

<style>
body { background: #f4f5fa; }
</style>

<style scoped>
* { box-sizing: border-box; }
.screen { display: flex; flex-direction: column; height: 100vh; overflow: hidden; font-family: "Open Sans", "Noto Sans", sans-serif; }
button, input, select { font: inherit; color: inherit; }
svg { flex: none; display: block; }
.bare { background: none; border: 0; padding: 0; display: flex; align-items: center; justify-content: center; }

.browser { background: #242329; color: #fff; height: 173px; flex: none; }
.tabstrip { background: #111113; height: 60px; display: flex; align-items: center; padding: 2px 0 0 5px; font-size: 17px; color: #b4b4b8; }
.pinned { width: 48px; height: 50px; margin-right: 4px; border: 1px solid #3a3a3e; border-radius: 12px; background: #111113; padding: 0; display: flex; align-items: center; justify-content: center; }
.tab { flex: 0 1 306px; display: flex; align-items: center; height: 24px; padding: 0 8px 0 18px; border-right: 1px solid #3c3c40; min-width: 0; }
.tab:nth-child(7), .tab.active { border-right: 0; }
.fav { width: 25px; height: 25px; margin-right: 12px; }
.tab-title { flex: 1; overflow: hidden; white-space: nowrap; mask-image: linear-gradient(90deg, #000 88%, transparent); }
.tab.active { flex-basis: 298px; height: 50px; background: #242329; border-radius: 12px; color: #fff; padding-right: 16px; }
.tab.active .bare { margin-left: 14px; }
.plus { margin-left: 22px; }
.window-buttons { margin-left: auto; display: flex; gap: 50px; padding-right: 25px; }

.toolbar { height: 60px; display: flex; align-items: center; }
.history { display: flex; gap: 21px; padding-left: 21px; }
.mark { margin-left: 243px; }
.address { flex: 0 1 1488px; height: 48px; margin-left: 23px; border-radius: 12px; background: #111113; display: flex; align-items: center; padding: 0 30px 0 14px; }
.url { flex: 1; margin-left: 23px; font-size: 20px; color: #b9b9bd; }
.url span { color: #f4f4f6; }
.rule { width: 1px; height: 24px; background: #8a8a8e; margin: 0 16px 0 13px; }
.address .bare:last-child { margin-left: 25px; }
.ext { margin-left: auto; display: flex; gap: 21px; }
.vpn { width: 80px; height: 42px; margin: 0 13px 0 12px; border: 1px solid #36353c; border-radius: 12px; background: none; font-size: 17px; display: flex; align-items: center; gap: 6px; padding: 0 0 0 10px; }
.menu { margin: 0 21px; }

.bookmarks { height: 46px; display: flex; align-items: center; padding: 0 20px 0 18px; font-size: 17px; gap: 29px; }
.bookmarks a { color: #fff; text-decoration: none; display: flex; align-items: center; gap: 9px; white-space: nowrap; }
.dark-rule { width: 3px; height: 24px; background: #111113; margin-left: auto; margin-right: -9px; }

.app { flex: 1; min-height: 0; display: flex; font-family: Inter, Lato, sans-serif; font-weight: 300; }
aside { width: 300px; flex: none; background: #f9fbff; display: flex; flex-direction: column; }
.side-card { flex: 1; min-height: 0; background: #fff; border-radius: 0 30px 30px 0; box-shadow: 0 2px 20px rgba(0, 0, 0, .14); padding-top: 19px; }
.logo { margin: 0 28px 13px; }
.nav a { height: 72px; display: flex; align-items: center; padding-left: 48px; font-size: 25px; color: #7f89a8; text-decoration: none; }
.nav a span { margin-left: 22px; }
.nav a.active { color: #2f74ff; border-right: 6px solid #2f74ff; }
.nav .more { margin-left: auto; margin-right: 31px; }
.collapse { height: 81px; justify-content: flex-end; padding: 8px 32px 0 0; }

main { flex: 1; min-width: 0; display: flex; flex-direction: column; background: #f4f5fa; color: #333; }
.topbar { height: 108px; flex: none; display: flex; align-items: center; padding: 5px 72px 0 51px; }
h1 { margin: 0 auto 0 22px; padding-top: 2px; font-size: 32px; font-weight: 300; color: #073b4c; }
.org { height: 50px; border: 0; border-radius: 6px; background: #fff; color: #111; font-size: 22px; font-weight: 300; display: flex; align-items: center; gap: 14px; padding: 0 22px; margin-right: 43px; }
.user { font-size: 21px; margin-left: 12px; color: #333; }
.body { flex: 1; min-height: 0; display: flex; }
.scroller { flex: 1; overflow: hidden; padding: 0 48px; }
.note { margin: 14px 0 23px; line-height: 35px; font-size: 24px; color: #455fa0; }
.card { background: #fff; border-radius: 8px; padding: 36px; min-height: 100%; }
.row { display: flex; }
.cell { width: 476px; border-top: 1px solid #c4cbd4; padding-left: 18px; display: flex; align-items: center; font-size: 21px; font-weight: 500; color: #808080; }
.row:nth-child(odd) .cell { background: #f8fcff; }
.cell b { color: #ff6464; font-weight: 600; margin-left: 4px; }
.help { margin: -14px 0 0 8px; }
.control { margin-left: -3px; padding: 19px 0 18px; }
.pick { position: relative; width: 32px; border: 1px solid transparent; padding: 7px 0 7px 15px; font-size: 21px; line-height: 26px; color: #222; }
.pick select { position: absolute; inset: -1px; width: 32px; border: 1px solid #e2e5e8; border-radius: 5px; background: #fff; appearance: none; }
.pick span { position: relative; display: block; width: 15px; pointer-events: none; }
.pick svg { position: absolute; left: -3px; top: 50%; margin-top: -7px; pointer-events: none; }
.severity { position: relative; height: 52px; }
.severity select { width: 38px; height: 52px; border: 1px solid #e2e5e8; border-radius: 8px; background: #fff; appearance: none; }
.severity svg { position: absolute; left: 17px; top: 22px; pointer-events: none; }
.datetime { width: 377px; height: 53px; background: #f8fcff; display: flex; align-items: center; font-size: 21px; font-weight: 500; color: #808080; }
.datetime label { width: 85px; }
.datetime label + input { height: 53px; border: 1px solid #e2e5e8; border-radius: 8px; background: #fff; font-size: 19px; font-weight: 300; }
.datetime .d { width: 38px; margin-right: 107px; padding: 0 18px; }
.datetime label[for="time"] { width: 93px; }
.datetime .t { width: 43px; padding: 0 16px 0 18px; }
.attach { width: 106px; height: 84px; border: 1px solid #b9bdc6; border-radius: 5px; background: linear-gradient(90deg, #0f5fff, #558dff); color: #fff; font-size: 22px; line-height: 30px; font-weight: 400; padding: 0; display: flex; flex-direction: column; align-items: center; justify-content: center; gap: 4px; }
.map { position: relative; width: 600px; height: 300px; background: #f7f7f7; font-family: Roboto, sans-serif; font-size: 27px; font-weight: 400; }
.map-type { position: absolute; left: 15px; top: 15px; height: 60px; display: flex; background: #fff; border-radius: 3px; box-shadow: 0 1px 6px rgba(0, 0, 0, .3); }
.map-type button { border: 0; background: none; padding: 0 25px; color: #565656; }
.map-type button:first-child { color: #000; font-weight: 500; border-right: 1px solid #e6e6e6; }
.full { position: absolute; right: 15px; top: 15px; width: 60px; height: 60px; border: 0; background: #fff; border-radius: 3px; box-shadow: 0 1px 6px rgba(0, 0, 0, .3); padding: 0 16px; }
.scrollbar { width: 24px; background: #f1f1f1; display: flex; flex-direction: column; align-items: center; padding: 10px 0; }
.scrollbar i { width: 20px; flex: 0 1 61%; background: #c1c1c1; margin: 8px 0 auto; }
footer { height: 74px; flex: none; border-top: 1px solid #c4cbd4; background: #eff3f6; display: grid; grid-template-columns: 1fr auto 1fr; align-items: center; font-size: 18px; color: #222; padding: 4px 118px 0 0; }
.copy { grid-column: 2; margin-right: 92px; }
.copy a { color: #4a7bdc; text-decoration: none; }
.version { justify-self: end; }

.taskbar { height: 72px; flex: none; border-top: 2px solid #40424b; background: linear-gradient(90deg, #1b2036, #1d2340 35%, #1f202c 60%, #1c2140 82%, #1f202a); color: #fff; display: grid; grid-template-columns: 1fr auto 1fr; align-items: center; font-size: 18px; line-height: 24px; }
.weather { background: none; border: 0; text-align: left; display: flex; align-items: center; gap: 11px; padding: 0 0 0 29px; }
.dock { display: flex; align-items: center; gap: 6px; }
.slot { position: relative; width: 60px; height: 60px; border: 1px solid transparent; border-radius: 8px; background: none; padding: 0; display: flex; align-items: center; justify-content: center; }
.slot.current { background: #2e2f3a; border-color: #3a3b45; }
.slot i { position: absolute; bottom: 1px; left: 50%; width: 8px; height: 5px; margin-left: -4px; border-radius: 3px; background: #9a9ba2; }
.slot .bar { width: 24px; margin-left: -12px; background: #4cc2ff; }
.letter { width: 36px; height: 36px; background: #1e40af; font-size: 24px; line-height: 34px; font-weight: 600; }
.search { width: 330px; height: 48px; border: 2px solid #565868; border-radius: 24px; background: #3f4154; display: flex; align-items: center; padding-left: 16px; }
.search input { flex: 1; min-width: 0; border: 0; background: none; padding: 0 0 0 14px; font-size: 19px; }
.search input::placeholder { color: #d6d6de; opacity: 1; }
.chip { width: 80px; height: 40px; border-radius: 20px; background: #5a5a69; display: flex; align-items: center; justify-content: center; }
.tray { justify-self: end; display: flex; align-items: center; gap: 10px; padding-right: 31px; }
.mic { width: 48px; height: 60px; margin: 0 5px; border: 0; border-radius: 6px; background: #4cc2ff; padding: 0; display: flex; align-items: center; justify-content: center; }
.lang { text-align: center; margin-right: 16px; }
.clock { text-align: right; margin-left: 12px; }
</style>
